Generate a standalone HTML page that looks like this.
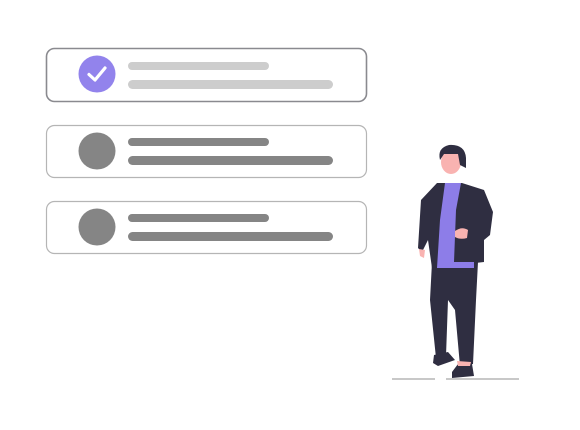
<!DOCTYPE html>
<html><head><style>
html,body{margin:0;padding:0;background:#fff;width:580px;height:430px;overflow:hidden}
</style></head><body>
<svg width="580" height="430" viewBox="0 0 580 430" xmlns="http://www.w3.org/2000/svg">
<rect x="46.5" y="48.5" width="320" height="53" rx="8" fill="#fff" stroke="#8a8a8f" stroke-width="1.6"/>
<rect x="46.5" y="125.5" width="320" height="52" rx="8" fill="#fff" stroke="#b5b5b5" stroke-width="1.2"/>
<rect x="46.5" y="201.5" width="320" height="52" rx="8" fill="#fff" stroke="#b5b5b5" stroke-width="1.2"/>
<circle cx="97" cy="74" r="18.5" fill="#9283ec"/>
<path d="M89 74.5 L95 80 L105 68" fill="none" stroke="#fff" stroke-width="3.2" stroke-linecap="round" stroke-linejoin="round"/>
<rect x="128" y="62" width="141" height="8" rx="4" fill="#cdcdcd"/>
<rect x="128" y="80" width="205" height="9" rx="4.5" fill="#cdcdcd"/>
<circle cx="97" cy="151" r="18.5" fill="#858585"/>
<rect x="128" y="138" width="141" height="8" rx="4" fill="#858585"/>
<rect x="128" y="156" width="205" height="9" rx="4.5" fill="#858585"/>
<circle cx="97" cy="227" r="18.5" fill="#858585"/>
<rect x="128" y="214" width="141" height="8" rx="4" fill="#858585"/>
<rect x="128" y="232" width="205" height="9" rx="4.5" fill="#858585"/>
<!-- ground -->
<rect x="392" y="378" width="43" height="2" fill="#c8c8c8"/>
<rect x="446" y="378" width="73" height="2" fill="#c8c8c8"/>
<!-- legs -->
<path d="M432 262 L478 262 L476 300 L473 364 L460 366 L455 310 L448 300 L446 356 L436 358 L430 300 Z" fill="#2f2e41"/>
<!-- shoes -->
<path d="M434 355 L448 352 L455 360 L438 366 L433 363 Z" fill="#2f2e41"/>
<path d="M458 364 L472 364 L474 376 L452 378 L452 372 Z" fill="#2f2e41"/>
<path d="M457 361 L471 362 L470 366 L458 366Z" fill="#f9b3b1"/>
<!-- jacket -->
<path d="M437 183 L462 183 L484 190 L493 212 L490 235 L484 240 L484 262 L432 268 L428 240 L422 252 L418 248 L421 200 Z" fill="#2f2e41"/>
<!-- shirt -->
<path d="M445 183 L461 183 L456 210 L454 262 L474 262 L474 268 L437 268 L440 220 Z" fill="#8d7de8"/>
<!-- hand -->
<path d="M455 231 Q462 226 468 230 L467 238 Q460 240 455 237 Z" fill="#f9b3b1"/>
<path d="M419 249 L425 250 L424 258 L420 256 Z" fill="#f9b3b1"/>
<!-- head -->
<ellipse cx="451" cy="162" rx="10" ry="12" fill="#f9b3b1"/>
<path d="M440 160 Q437 148 449 145 Q465 144 466 158 L466 168 L460 165 L458 154 L444 154 Z" fill="#2f2e41"/>
</svg>
</body></html>
